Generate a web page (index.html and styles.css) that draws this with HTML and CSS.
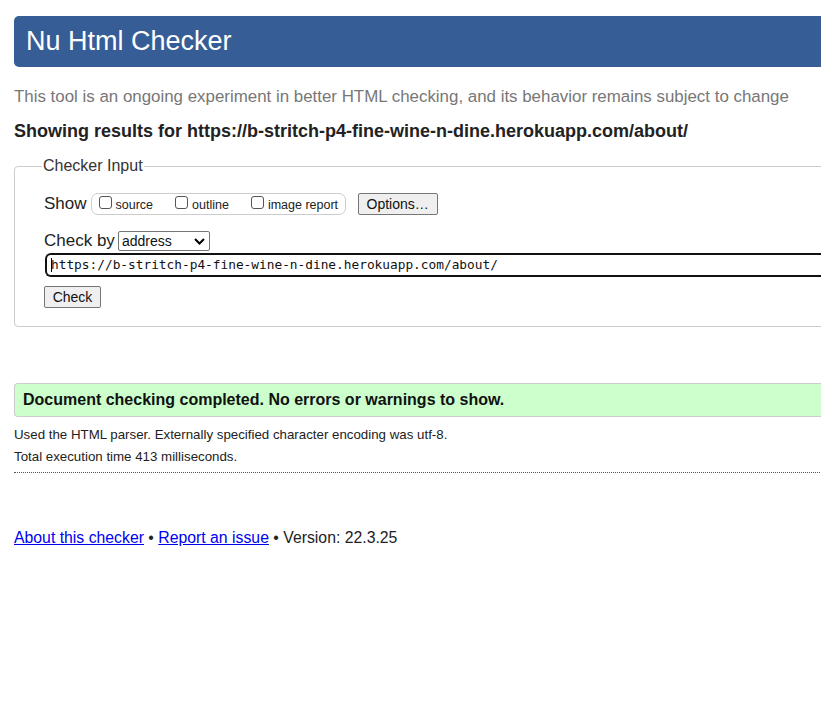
FILE: index.html
```html
<!DOCTYPE html>
<html>
<head>
<meta charset="utf-8">
<title>Nu Html Checker</title>
<link rel="stylesheet" href="styles.css">
</head>
<body>
<div class="page">
  <h1 class="title">Nu Html Checker</h1>
  <p class="intro">This tool is an ongoing experiment in better HTML checking, and its behavior remains subject to change</p>
  <p class="showing">Showing results for https://b-stritch-p4-fine-wine-n-dine.herokuapp.com/about/</p>
  <fieldset class="input">
    <legend>Checker Input</legend>
    <div class="row show-row">
      <span class="label">Show</span>
      <span class="checks">
        <label class="chk"><span class="box"></span>source</label>
        <label class="chk"><span class="box"></span>outline</label>
        <label class="chk"><span class="box"></span>image report</label>
      </span>
      <button class="btn options">Options…</button>
    </div>
    <div class="row by-row">
      <span class="label">Check by</span>
      <span class="select">address<svg class="chev" width="11" height="7" viewBox="0 0 11 7"><path d="M1 1 L5.5 5.5 L10 1" fill="none" stroke="#000" stroke-width="2"/></svg></span>
    </div>
    <div class="url"><span class="caret"></span>https://b-stritch-p4-fine-wine-n-dine.herokuapp.com/about/</div>
    <button class="btn check">Check</button>
  </fieldset>
  <div class="success">Document checking completed. No errors or warnings to show.</div>
  <p class="meta first">Used the HTML parser. Externally specified character encoding was utf-8.</p>
  <p class="meta">Total execution time 413 milliseconds.</p>
  <hr class="dots">
  <p class="footer"><a href="#">About this checker</a> • <a href="#">Report an issue</a> • Version: 22.3.25</p>
</div>
</body>
</html>
```
FILE: styles.css
```css
html, body {
  margin: 0;
  padding: 0;
  overflow: hidden;
  background: #fff;
}
body {
  font-family: "Liberation Sans", Arial, sans-serif;
  color: #222;
}
.page {
  width: 900px;
  padding: 16px 0 0 14px;
}
.title {
  margin: 0;
  height: 51px;
  line-height: 50px;
  background: #365d95;
  color: #fff;
  font-weight: normal;
  font-size: 27px;
  padding-left: 12px;
  border-radius: 5px;
}
.intro {
  margin: 20px 0 0;
  font-size: 16.9px;
  color: #777;
  line-height: 20px;
}
.showing {
  margin: 14px 0 0;
  font-size: 18px;
  font-weight: bold;
  line-height: 20px;
  color: #222;
}
.input {
  margin: 16px 0 0;
  border: 1px solid #ccc;
  border-radius: 4px;
  padding: 0 0 18px 29px;
  min-width: 0;
}
.input legend {
  font-size: 16px;
  color: #333;
  padding: 0 1px;
  margin-left: -2px;
}
.row {
  display: flex;
  align-items: center;
}
.show-row {
  margin-top: 17px;
  height: 24px;
}
.label {
  font-size: 17px;
  color: #222;
}
.checks {
  margin-left: 4px;
  display: flex;
  align-items: center;
  height: 22px;
  width: 255px;
  box-sizing: border-box;
  border: 1px solid #ccc;
  border-radius: 7px;
  padding-left: 7px;
  padding-top: 2px;
  font-size: 12.5px;
}
.chk {
  display: flex;
  align-items: center;
  color: #222;
  margin-right: 22px;
}
.chk:last-child { margin-right: 0; }
.box {
  width: 13px;
  height: 13px;
  border: 1px solid #555;
  border-radius: 3px;
  margin-right: 4px;
  margin-top: -6px;
  box-sizing: border-box;
}
.btn {
  font-family: "Liberation Sans", Arial, sans-serif;
  font-size: 14px;
  color: #111;
  background: #efefef;
  border: 1px solid #767676;
  border-radius: 2px;
  padding: 0 8px;
  height: 22px;
}
.options {
  margin-left: 12px;
  width: 80px;
}
.by-row {
  margin-top: 14px;
  height: 22px;
}
.select {
  margin-left: 3px;
  width: 92px;
  height: 20px;
  box-sizing: border-box;
  border: 1px solid #767676;
  border-radius: 2px;
  font-size: 14px;
  display: flex;
  align-items: center;
  justify-content: space-between;
  padding: 0 4px 0 3px;
  color: #111;
}
.url {
  margin-top: 1px;
  height: 24px;
  box-sizing: border-box;
  border: 2px solid #111;
  border-radius: 6px 0 0 6px;
  border-right: none;
  margin-left: 1px;
  font-family: "DejaVu Sans Mono", "Liberation Mono", monospace;
  font-size: 12.8px;
  line-height: 20px;
  padding-left: 4px;
  color: #111;
  display: flex;
  align-items: center;
}
.caret {
  display: inline-block;
  width: 1px;
  height: 14px;
  background: #000;
  margin-right: -1px;
}
.check {
  margin-top: 9px;
  width: 57px;
  padding: 0;
}
.success {
  margin-top: 56px;
  height: 34px;
  box-sizing: border-box;
  background: #ccffcc;
  border: 1px solid #ccc;
  border-right: none;
  border-radius: 4px 0 0 4px;
  font-weight: bold;
  font-size: 16px;
  line-height: 31px;
  padding-left: 8px;
  color: #111;
}
.meta {
  margin: 0;
  font-size: 13.3px;
  line-height: 22px;
  color: #222;
}
.meta.first { margin-top: 7px; }
.dots {
  margin: 4px 0 0;
  border: none;
  border-top: 1px dotted #555;
  height: 0;
}
.footer {
  margin: 55px 0 0;
  font-size: 15.8px;
  line-height: 20px;
  color: #222;
}
.footer a {
  color: #0000ee;
  text-decoration: underline;
}
```
